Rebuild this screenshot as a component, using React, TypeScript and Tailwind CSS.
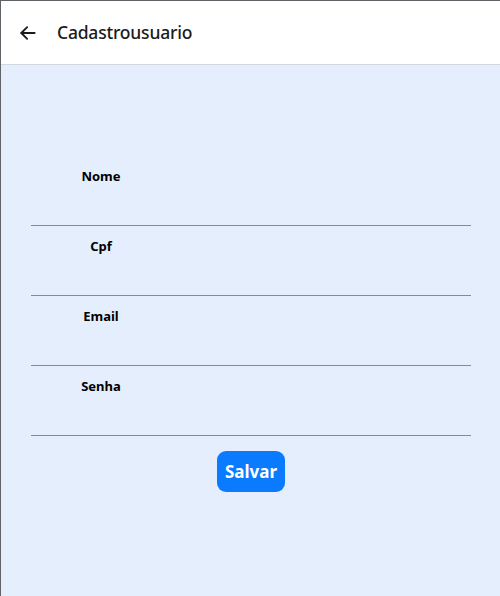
import React from "react";

const fields = ["Nome", "Cpf", "Email", "Senha"];

const App: React.FC = () => {
  return (
    <div
      className="flex flex-col w-[500px] h-[596px] border-t border-l border-[#5f6368] bg-[#e4eefd] overflow-hidden"
      style={{ fontFamily: '"Noto Sans", "Open Sans", sans-serif' }}
    >
      {/* header */}
      <div className="flex items-center h-[64px] bg-white border-b border-[#d3d8e0] shrink-0">
        <svg className="ml-[17px] h-[20px] w-[20px] text-[#1b1b1b]" viewBox="0 0 24 24" fill="none" stroke="currentColor" strokeWidth="2.2" strokeLinecap="round" strokeLinejoin="round">
          <path d="M20 12H4" />
          <path d="M11 5l-7 7 7 7" />
        </svg>
        <h1 className="ml-[19px] text-[17.5px] font-medium text-[#1b1b1b] tracking-[-0.2px]">Cadastrousuario</h1>
      </div>

      {/* form */}
      <div className="flex flex-col pt-[91px] pl-[30px] pr-[29px]">
        {fields.map((f) => (
          <div key={f} className="h-[70px] border-b border-[#858b94]">
            <p className="w-[140px] pt-[11px] text-center text-[13px] leading-[18px] font-bold text-black">{f}</p>
          </div>
        ))}
        <div className="flex justify-center mt-[15px]">
          <button className="w-[68px] h-[41px] rounded-[9px] bg-[#0a7bff] text-white text-[17px] font-bold">
            Salvar
          </button>
        </div>
      </div>
    </div>
  );
};

export default App;
